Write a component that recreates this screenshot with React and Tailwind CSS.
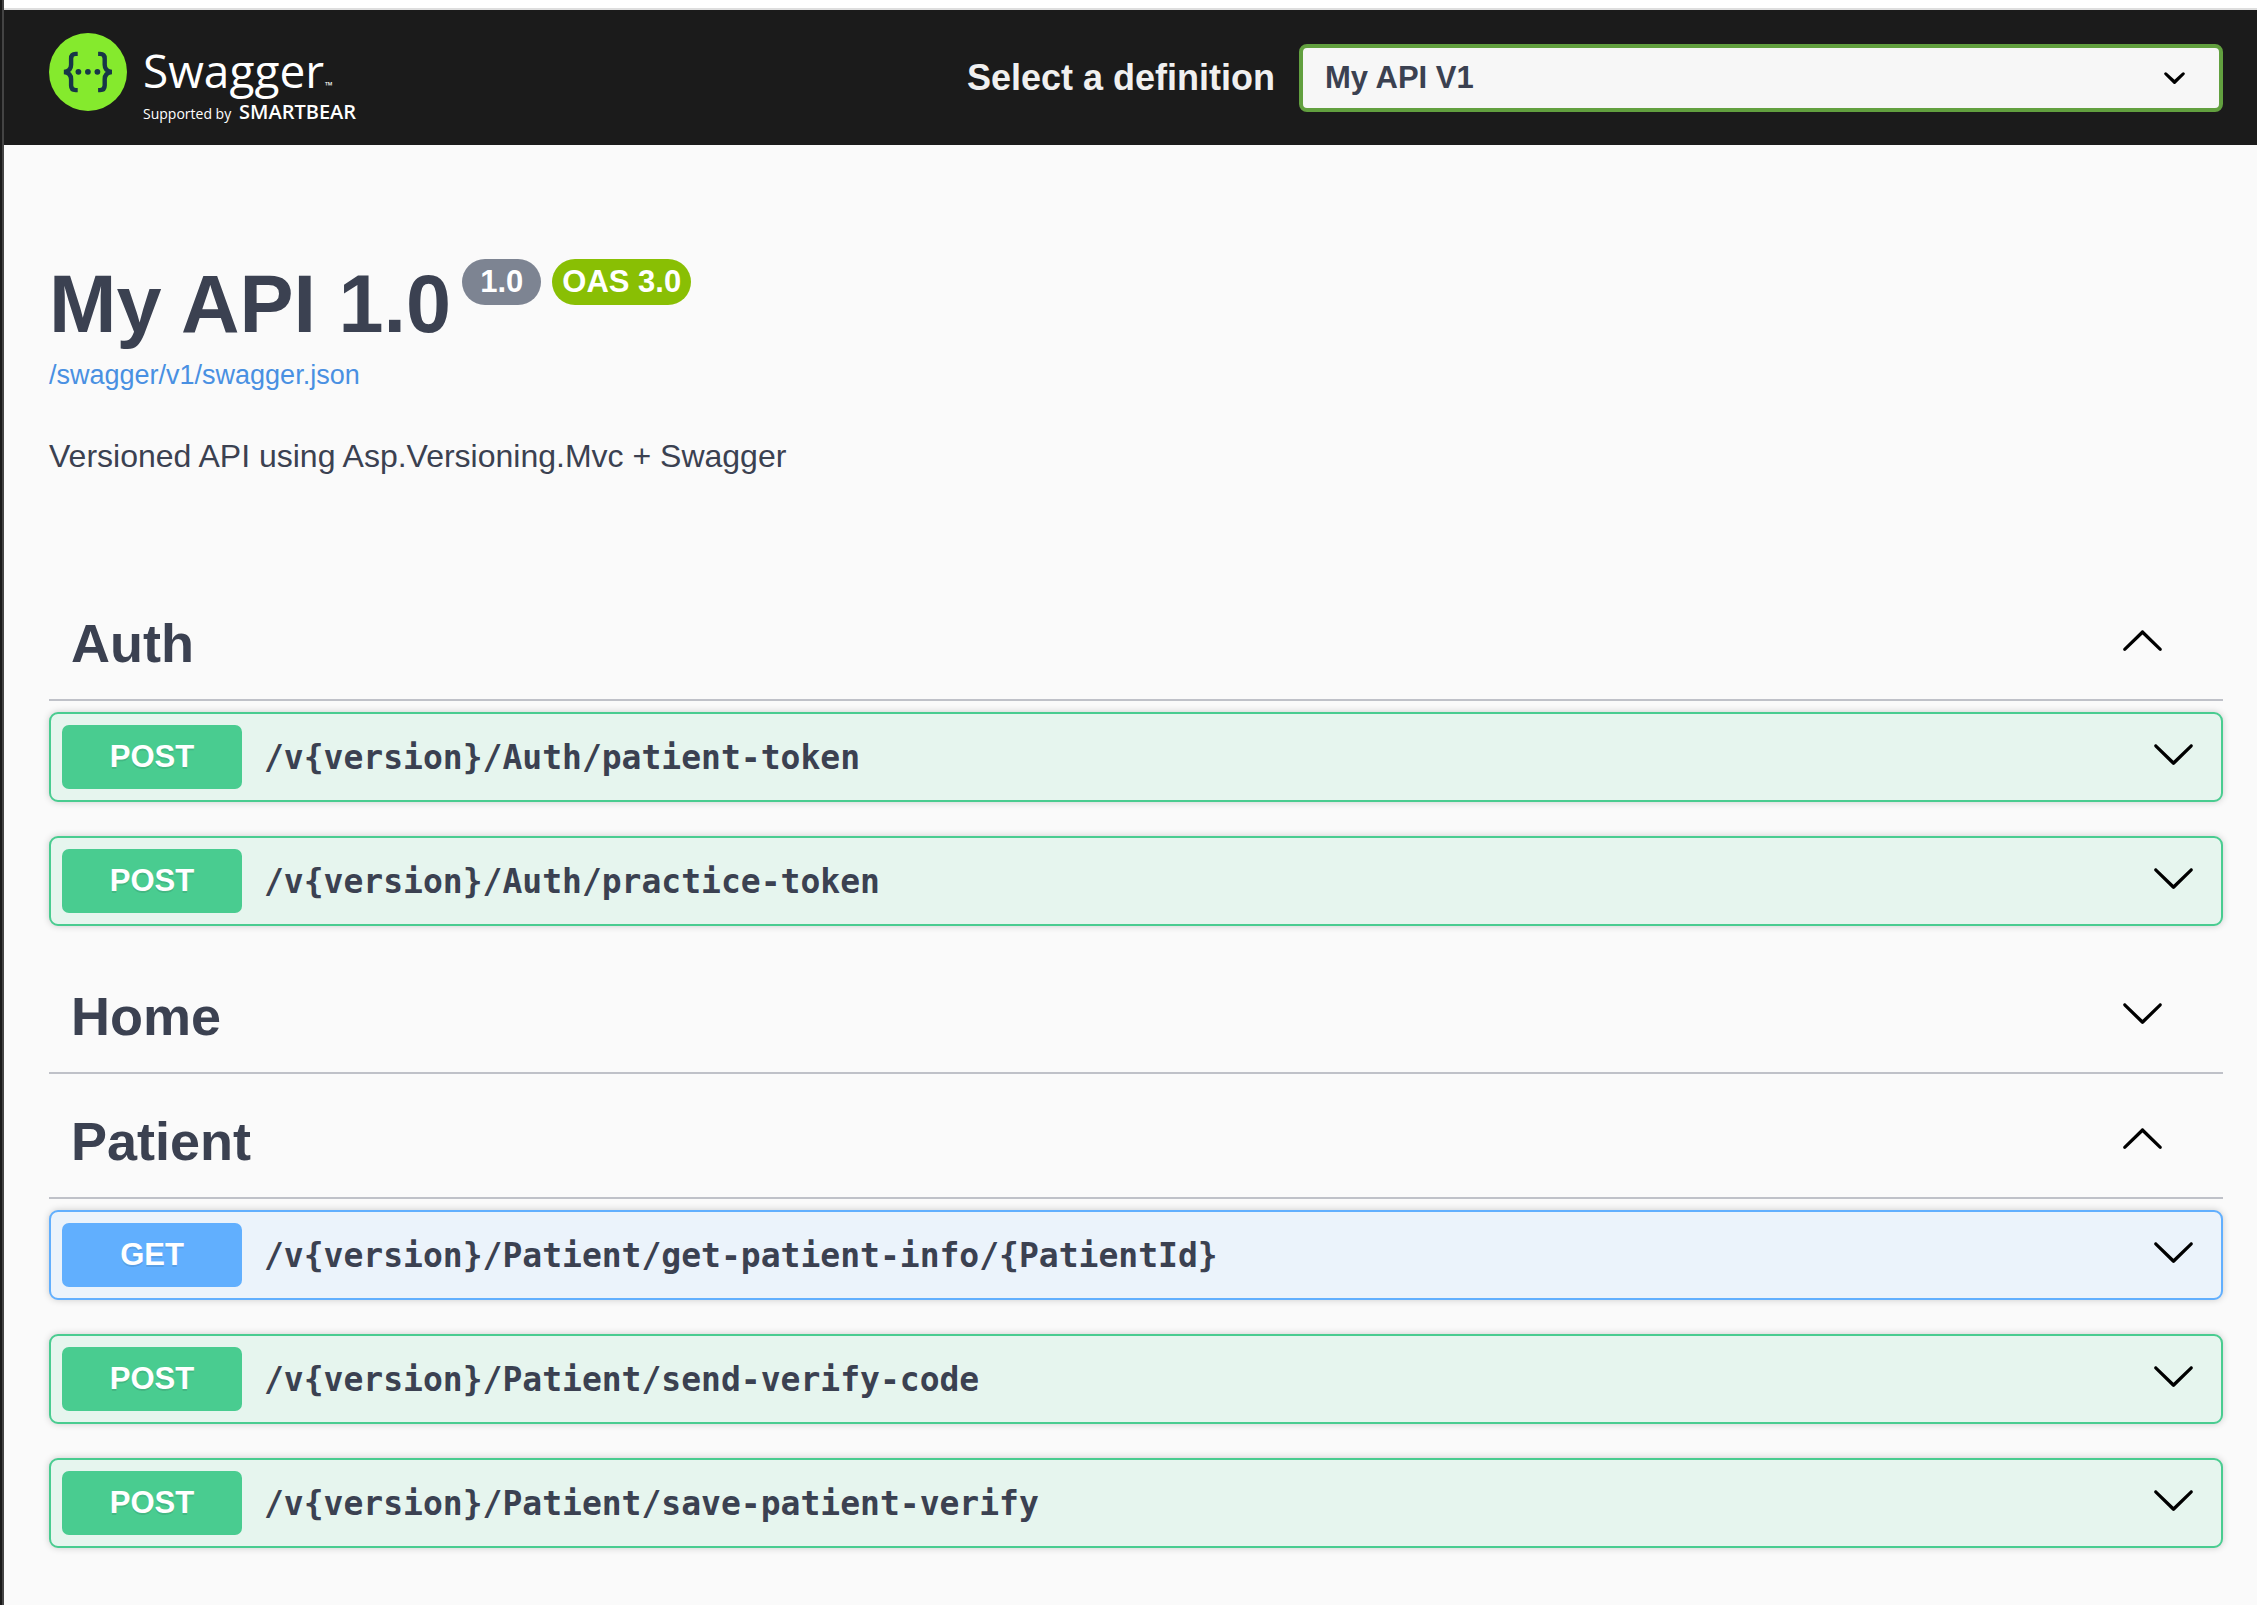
import React, { useState } from 'react'

const tags = [
  {
    name: 'Auth',
    open: true,
    operations: [
      { method: 'POST', path: '/v{version}/Auth/patient-token' },
      { method: 'POST', path: '/v{version}/Auth/practice-token' },
    ],
  },
  { name: 'Home', open: false, operations: [] },
  {
    name: 'Patient',
    open: true,
    operations: [
      { method: 'GET', path: '/v{version}/Patient/get-patient-info/{PatientId}' },
      { method: 'POST', path: '/v{version}/Patient/send-verify-code' },
      { method: 'POST', path: '/v{version}/Patient/save-patient-verify' },
    ],
  },
]

const methodStyles = {
  GET: { block: 'border-[#61affe] bg-[#ebf3fb]', badge: 'bg-[#61affe]' },
  POST: { block: 'border-[#49cc90] bg-[#e6f5ee]', badge: 'bg-[#49cc90]' },
}

const ArrowDown = () => (
  <svg viewBox="0 0 20 20" className="mb-2 size-[45px] shrink-0" aria-hidden="true">
    <path d="M17.418 6.109c.272-.268.709-.268.979 0s.271.701 0 .969l-7.908 7.83c-.27.268-.707.268-.979 0l-7.908-7.83c-.27-.268-.27-.701 0-.969.271-.268.709-.268.979 0L10 13.25l7.418-7.141z" />
  </svg>
)

const ArrowUp = () => (
  <svg viewBox="0 0 20 20" className="mb-2 size-[45px] shrink-0" aria-hidden="true">
    <path d="M17.418 14.908c.272.268.709.268.979 0s.271-.701 0-.969l-7.908-7.83c-.27-.268-.707-.268-.979 0l-7.908 7.83c-.27.268-.27.701 0 .969.271.268.709.268.979 0L10 7.767l7.418 7.141z" />
  </svg>
)

const Logo = () => (
  <svg width="330" height="90" viewBox="0 0 330 90" className="overflow-visible" role="img" aria-label="Swagger">
    <circle cx="39" cy="39" r="39" fill="#85ea2d" />
    <g fill="none" stroke="#173647" strokeWidth="4.4">
      <path d="M28.7 20.9h-2c-3.2 0-4.6 1.6-4.6 4.6v6.2c0 4-1.6 6.6-7 7.3 5.4.7 7 3.3 7 7.3v6.2c0 3 1.4 4.6 4.6 4.6h2" />
      <path d="M49.1 20.9h2c3.2 0 4.6 1.6 4.6 4.6v6.2c0 4 1.6 6.6 7 7.3-5.4.7-7 3.3-7 7.3v6.2c0 3-1.4 4.6-4.6 4.6h-2" />
    </g>
    <g fill="#173647">
      <circle cx="29.4" cy="38.8" r="2.9" />
      <circle cx="38.9" cy="38.8" r="2.9" />
      <circle cx="48.4" cy="38.8" r="2.9" />
    </g>
    <g fill="#fff" className="font-['Open_Sans','Noto_Sans',sans-serif]">
      <text x="94" y="55" fontSize="46">Swagger</text>
      <text x="276" y="56" fontSize="10">™</text>
      <text x="94" y="86" fontSize="14">Supported by</text>
      <text x="190" y="86" fontSize="20" fontWeight="600">SMARTBEAR</text>
    </g>
  </svg>
)

const Topbar = () => {
  const [definition, setDefinition] = useState('v1')

  return (
    <header className="border-t-2 border-[#dedede] bg-[#1b1b1b]">
      <div className="flex items-center pt-[23px] pr-[34px] pb-[22px] pl-[45px]">
        <a href="#" className="flex-1">
          <Logo />
        </a>
        <div className="flex w-full max-w-[1350px] items-center">
          <label htmlFor="select" className="flex-1 pr-6 text-right text-4xl font-bold whitespace-nowrap text-[#f0f0f0]">
            Select a definition
          </label>
          <div className="relative flex flex-[2_2_120px]">
            <select
              id="select"
              value={definition}
              onChange={(e) => setDefinition(e.target.value)}
              className="h-[68px] w-full appearance-none rounded-lg border-4 border-[#62a03f] bg-[#f7f7f7] pr-[90px] pl-[22px] text-[31px] leading-[36px] font-bold text-[#3b4151]"
            >
              <option value="v1">My API V1</option>
            </select>
            <svg viewBox="0 0 20 20" className="pointer-events-none absolute top-[11px] right-[26px] size-[45px]" aria-hidden="true">
              <path d="M13.418 7.859a.695.695 0 01.978 0 .68.68 0 010 .969l-3.908 3.83a.697.697 0 01-.979 0l-3.908-3.83a.68.68 0 010-.969.695.695 0 01.978 0L10 11l3.418-3.141z" />
            </svg>
          </div>
        </div>
      </div>
    </header>
  )
}

const Info = () => (
  <section className="py-[113px]">
    <div className="flex items-start">
      <h1 className="mr-[11px] text-[81px] leading-[92px] font-bold">My API 1.0</h1>
      <div className="flex gap-[11px] pt-px text-[31px] leading-[46px] font-bold text-white">
        <span className="rounded-full bg-[#7d8492] px-[18px]">1.0</span>
        <span className="rounded-full bg-[#89bf04] px-[10px]">OAS 3.0</span>
      </div>
    </div>
    <a href="/swagger/v1/swagger.json" className="mt-[9px] inline-block text-[27px] leading-[32px] text-[#4990e2]">
      /swagger/v1/swagger.json
    </a>
    <p className="mt-[47px] text-[32px] leading-[36px]">Versioned API using Asp.Versioning.Mvc + Swagger</p>
  </section>
)

const Operation = ({ method, path }) => (
  <button
    type="button"
    className={`mb-[34px] flex w-full items-center rounded-[9px] border-2 p-[11px] pr-[25px] text-left shadow-[0_0_7px_rgba(0,0,0,0.19)] ${methodStyles[method].block}`}
  >
    <span
      className={`w-[180px] rounded-[7px] text-center text-[31px] leading-[64px] font-bold text-white text-shadow-[0_2px_0_rgba(0,0,0,0.1)] ${methodStyles[method].badge}`}
    >
      {method}
    </span>
    <span className="flex-1 px-[22px] pt-0.5 font-['DejaVu_Sans_Mono',monospace] text-[33px] leading-[40px] font-bold">{path}</span>
    <ArrowDown />
  </button>
)

const TagSection = ({ tag }) => {
  const [open, setOpen] = useState(tag.open)

  return (
    <section>
      <h2 className="mb-[11px] border-b-2 border-[#bfc1c8]">
        <button
          type="button"
          onClick={() => setOpen(!open)}
          aria-expanded={open}
          className="flex h-28 w-full items-center justify-between pr-[58px] pl-[22px] text-[54px] font-bold"
        >
          {tag.name}
          {open ? <ArrowUp /> : <ArrowDown />}
        </button>
      </h2>
      {open && tag.operations.map((op) => <Operation key={op.path} method={op.method} path={op.path} />)}
    </section>
  )
}

export default function App() {
  return (
    <div className="min-h-screen border-l-2 border-[#1a1a1a] font-['Liberation_Sans',Arial,sans-serif] text-[#3b4151]">
      <div className="min-h-screen border-l-2 border-[#444] bg-[#fafafa]">
        <div className="h-2 bg-white" />
        <Topbar />
        <main className="pr-[34px] pl-[45px]">
          <Info />
          {tags.map((tag) => (
            <TagSection key={tag.name} tag={tag} />
          ))}
        </main>
      </div>
    </div>
  )
}
